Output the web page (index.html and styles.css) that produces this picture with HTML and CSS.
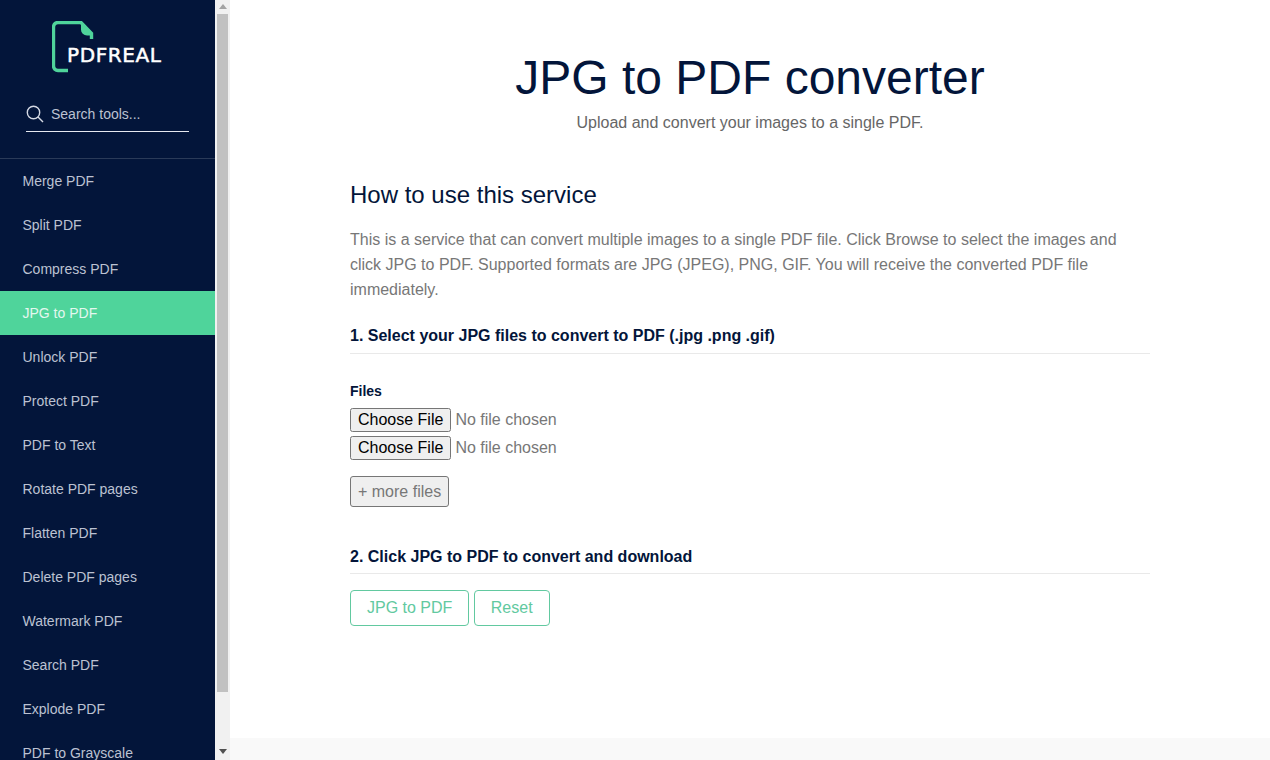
FILE: index.html
```html
<!DOCTYPE html>
<html lang="en"><head>
<meta charset="UTF-8">
<meta name="viewport" content="width=device-width, initial-scale=1.0">
<title>JPG to PDF converter</title>
<link rel="stylesheet" href="styles.css">
</head>
<body>
<aside class="sidebar">
<div class="brand">
<svg class="brand-mark" width="42" height="52" viewBox="0 0 42 52" aria-hidden="true">
<path d="M16 49.500H6a4.500 4.500 0 0 1-4.500-4.500V6A4.500 4.500 0 0 1 6 1.500h23L39.500 12.500V18" fill="none" stroke="#4fd49b" stroke-width="3.400"/>
<path d="M29 1.500L41 13.500v1h-6a6 6 0 0 1-6-6z" fill="#4fd49b"/>
</svg>
<span class="brand-name">PDFREAL</span>
</div>
<div class="search">
<svg width="18" height="18" viewBox="0 0 18 18" aria-hidden="true">
<circle cx="7.500" cy="7.500" r="6.200" fill="none" stroke="#d5d9e4" stroke-width="1.400"/>
<path d="M12 12l5 5" stroke="#d5d9e4" stroke-width="1.400"/>
</svg>
<span>Search tools...</span>
</div>
<nav class="menu">
<a href="#">Merge PDF</a>
<a href="#">Split PDF</a>
<a href="#">Compress PDF</a>
<a href="#" class="active">JPG to PDF</a>
<a href="#">Unlock PDF</a>
<a href="#">Protect PDF</a>
<a href="#">PDF to Text</a>
<a href="#">Rotate PDF pages</a>
<a href="#">Flatten PDF</a>
<a href="#">Delete PDF pages</a>
<a href="#">Watermark PDF</a>
<a href="#">Search PDF</a>
<a href="#">Explode PDF</a>
<a href="#">PDF to Grayscale</a>
</nav>
</aside>

<!-- the sidebar's scrollbar, the shot doesn't paint real ones -->
<div class="scrollbar" aria-hidden="true">
<span class="arrow arrow-up"></span>
<span class="thumb"></span>
<span class="arrow arrow-down"></span>
</div>

<div class="page">
<main class="content">
<h1>JPG to PDF converter</h1>
<p class="lead">Upload and convert your images to a single PDF.</p>
<h2>How to use this service</h2>
<p class="intro">This is a service that can convert multiple images to a single PDF file. Click Browse to select the images and click JPG to PDF. Supported formats are JPG (JPEG), PNG, GIF. You will receive the converted PDF file immediately.</p>
<h3>1. Select your JPG files to convert to PDF (.jpg .png .gif)</h3>
<form class="upload">
<label class="files-label">Files</label>
<input type="file" class="file">
<input type="file" class="file">
<button type="button" class="more">+ more files</button>
</form>
<h3 class="step-two">2. Click JPG to PDF to convert and download</h3>
<div class="actions">
<button type="button" class="btn">JPG to PDF</button>
<button type="button" class="btn">Reset</button>
</div>
</main>
<footer class="footer"></footer>
</div>
</body></html>
```

FILE: styles.css
```css
* {
	box-sizing: border-box;
}

html, body {
	height: 100%;
	margin: 0;
}

body {
	display: flex;
	overflow: hidden;
	font-family: "Liberation Sans", Arial, sans-serif;
	font-size: 16px;
	color: #777;
	background: #fff;
}

/* sidebar */
.sidebar {
	flex: 0 0 215px;
	height: 760px;
	overflow: hidden;
	background: #03153a;
}

.scrollbar {
	flex: 0 0 15px;
	display: flex;
	flex-direction: column;
	align-items: center;
	height: 760px;
	background: #f1f1f1;
}

.arrow {
	flex: 0 0 auto;
	width: 0;
	height: 0;
	margin: 4px 0 5px;
	border-left: 4px solid transparent;
	border-right: 4px solid transparent;
}

.arrow-up {
	border-bottom: 5px solid #a3a3a3;
}

.arrow-down {
	margin-top: auto;
	margin-bottom: 6px;
	border-top: 5px solid #505050;
}

.thumb {
	width: 11px;
	height: 678px;
	background: #c1c1c1;
}

.brand {
	position: relative;
	height: 73px;
	padding: 21px 0 0 52px;
}

.brand-mark {
	display: block;
}

.brand-name {
	position: absolute;
	left: 67px;
	top: 44px;
	font-family: "DejaVu Sans", sans-serif;
	font-size: 20px;
	line-height: 22px;
	letter-spacing: 0.600px;
	-webkit-text-stroke: 0.500px #fff;
	color: #fff;
}

.search {
	display: flex;
	align-items: center;
	gap: 7px;
	height: 59px;
	margin: 0 26px;
	padding-top: 30px;
	padding-bottom: 6px;
	border-bottom: 1px solid #e6e9f0;
	font-size: 14px;
	color: #bcc2d2;
}

.menu {
	margin-top: 26px;
	border-top: 1px solid #2a3a58;
}

.menu a {
	display: block;
	height: 44px;
	padding: 0 22.500px;
	font-size: 14px;
	line-height: 44px;
	color: #bcc2d2;
	text-decoration: none;
}

.menu a.active {
	background: #4fd49b;
	color: #e4f7ef;
}

/* main column */
.page {
	flex: 1;
	display: flex;
	flex-direction: column;
	height: 760px;
}

.content {
	flex: 1;
	width: 800px;
	margin: 0 auto;
	padding-top: 50px;
}

h1 {
	margin: 0;
	font-size: 48px;
	line-height: 56px;
	font-weight: 400;
	text-align: center;
	color: #03153a;
}

.lead {
	margin: 5px 0 0;
	line-height: 24px;
	text-align: center;
	color: #666;
}

h2 {
	margin: 45px 0 0;
	font-size: 24px;
	line-height: 30px;
	font-weight: 400;
	color: #03153a;
}

.intro {
	margin: 17px 0 0;
	line-height: 25px;
}

h3 {
	margin: 0;
	font-size: 16px;
	line-height: 20px;
	font-weight: 700;
	color: #03153a;
	padding-bottom: 7px;
	border-bottom: 1px solid #e9e9e9;
}

.intro + h3 {
	margin-top: 24px;
}

.upload {
	display: flex;
	flex-direction: column;
	align-items: flex-start;
	padding-top: 28px;
}

.files-label {
	font-size: 14px;
	line-height: 18px;
	font-weight: 700;
	color: #03153a;
	margin-bottom: 8px;
}

.file {
	display: block;
	font: inherit;
	height: 24px;
	margin-bottom: 4px;
	color: #777;
}

.more {
	height: 31px;
	margin-top: 12px;
	padding: 0 7px;
	font: inherit;
	color: #777;
	background: #efefef;
	border: 1px solid #767676;
	border-radius: 3px;
}

.step-two {
	margin-top: 40px;
	padding-bottom: 6px;
}

.actions {
	display: flex;
	gap: 4.450px;
	margin-top: 16px;
}

.btn {
	height: 36px;
	padding: 0 16px;
	font: inherit;
	color: #62c9a0;
	background: #fff;
	border: 1px solid #62c9a0;
	border-radius: 4px;
}

.footer {
	flex: 0 0 22px;
	background: #f9f9f9;
}
```
